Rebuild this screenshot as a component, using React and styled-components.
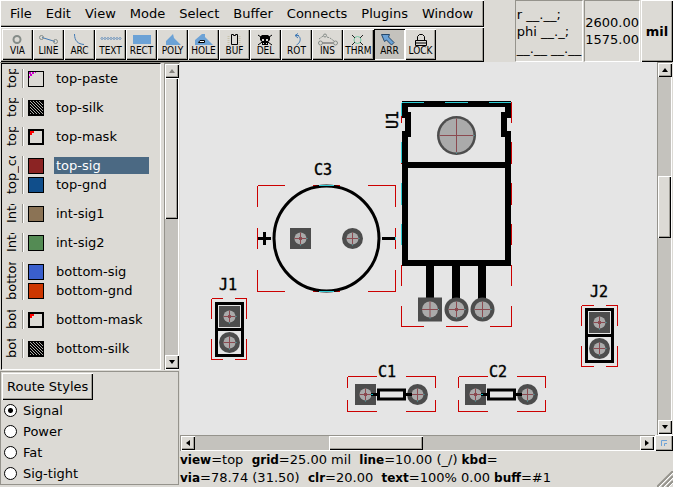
import React, { useState } from "react";
import styled, { createGlobalStyle, css } from "styled-components";

const GlobalStyle = createGlobalStyle`
  * { box-sizing: border-box; }
  body { margin: 0; background: #dcdad5; }
  body, button, input {
    font-family: "DejaVu Sans", sans-serif;
    font-size: 13px;
    line-height: 17px;
    color: #000;
  }
  button { margin: 0; padding: 0; border: 0; background: none; }
`;

const raised = css`
  background: #dcdad5;
  box-shadow: inset 1px 1px #fff, inset -1px -1px #000, inset -2px -2px #a19f98;
`;

const sunken = css`
  border: 1px solid;
  border-color: #95938c #fff #fff #95938c;
`;

const Page = styled.div`
  display: flex;
  flex-direction: column;
  height: 100vh;
  min-height: 400px;
`;

/* ---------- header ---------- */

const Header = styled.header`
  display: flex;
  flex: none;
  height: 62px;
`;

const HeaderMain = styled.div`
  display: flex;
  flex-direction: column;
  margin-right: auto;
`;

const MenuBar = styled.nav`
  ${raised}
  display: flex;
  height: 27px;
  padding: 0 4px 0 3px;
`;

const MenuItem = styled.button`
  padding: 0 7px;
`;

const Toolbar = styled.div`
  ${raised}
  display: flex;
  height: 35px;
  padding: 2px;
`;

const ToolButton = styled.button`
  ${raised}
  display: flex;
  flex-direction: column;
  align-items: center;
  width: 31px;
  height: 31px;
  font-family: "DejaVu Sans Condensed", "DejaVu Sans", sans-serif;
  font-size: 10px;
  line-height: 10px;
  ${(p) =>
    p.$active &&
    css`
      background: #c4c2bd;
      box-shadow: inset 1px 1px #000, inset -1px -1px #fff;
    `}
`;

const ToolIcon = styled.svg`
  flex: none;
  width: 31px;
  height: 17px;
`;

const Readout = styled.output`
  ${sunken}
  display: flex;
  flex-direction: column;
  justify-content: center;
  margin-right: 1px;
  padding: 0 ${(p) => (p.$tight ? 0 : 1)}px;
  white-space: nowrap;
`;

const UnitButton = styled.button`
  ${raised}
  width: 32px;
  font-weight: bold;
`;

/* ---------- body ---------- */

const Body = styled.div`
  display: grid;
  grid-template-columns: 180px minmax(0, 1fr);
  flex: 1;
  min-height: 0;
`;

const Sidebar = styled.aside`
  display: flex;
  flex-direction: column;
  min-height: 0;
  padding-bottom: 2px;
`;

const LayerArea = styled.div`
  display: flex;
  flex: 1;
  gap: 3px;
  min-height: 0;
  border-top: 1px solid #95938c;
  padding: 0 1px 1px 0;
`;

const LayerList = styled.div`
  display: flex;
  flex: 1;
  flex-direction: column;
  gap: 10px;
  overflow: hidden;
  margin-left: 1px;
  padding: 5px 11px 0 1px;
  border: 1px solid;
  border-color: #000 #fff #fff #000;
`;

const LayerGroup = styled.section`
  display: flex;
  flex: none;
`;

const GroupName = styled.div`
  display: flex;
  flex: none;
  width: 17px;
  height: ${(p) => p.$rows * 19}px;
  margin-right: 2px;
  overflow: hidden;
  writing-mode: vertical-rl;
  transform: rotate(180deg);
  white-space: nowrap;
`;

const GroupRows = styled.div`
  flex: 1;
  padding-left: 5px;
  border-left: 1px solid #95938c;
  box-shadow: inset 1px 0 #fff;
`;

const LayerRow = styled.div`
  display: flex;
  align-items: center;
  gap: 10px;
  height: 19px;
`;

const Swatch = styled.svg`
  flex: none;
  width: 16px;
  height: 16px;
`;

const LayerName = styled.button`
  flex: 1;
  padding: 0 2px;
  text-align: left;
  ${(p) =>
    p.$selected &&
    css`
      color: #fff;
      background: #4b6983;
    `}
`;

/* ---------- scroll bars ---------- */

const Track = styled.div`
  display: flex;
  flex: none;
  flex-direction: ${(p) => (p.$horizontal ? "row" : "column")};
  ${(p) => (p.$horizontal ? "height: 16px; margin-right: 2px" : "width: 15px")};
  padding: 1px;
  background: #c4c2bd;
  box-shadow: inset 1px 1px #95938c, inset -1px -1px #fff;
`;

const ArrowButton = styled.button`
  ${raised}
  display: flex;
  flex: none;
  align-items: center;
  justify-content: center;
  width: 14px;
  height: 14px;
`;

const Thumb = styled.div`
  ${raised}
  flex: ${(p) => p.$part} 1 0px;
`;

const Space = styled.div`
  flex: ${(p) => p.$part} 1 0px;
`;

const arrowShapes = {
  up: "M1 6 L4 2 L7 6 Z",
  down: "M1 2 H7 L4 6 Z",
  left: "M6 1 V7 L2 4 Z",
  right: "M2 1 L6 4 L2 7 Z",
};

function Arrow({ dir, muted }) {
  return (
    <ArrowButton aria-label={`Scroll ${dir}`} disabled={muted}>
      <svg width="8" height="8">
        <path d={arrowShapes[dir]} fill={muted ? "#85837d" : "#000"} />
      </svg>
    </ArrowButton>
  );
}

function ScrollBar({ horizontal, before, size, after, muted }) {
  return (
    <Track $horizontal={horizontal}>
      <Arrow dir={horizontal ? "left" : "up"} muted={muted} />
      <Space $part={before} />
      <Thumb $part={size} />
      <Space $part={after} />
      <Arrow dir={horizontal ? "right" : "down"} />
    </Track>
  );
}

/* ---------- route styles ---------- */

const RoutePanel = styled.fieldset`
  display: flex;
  flex: none;
  flex-direction: column;
  align-items: flex-start;
  min-width: 0;
  margin: 0 1px 0 0;
  padding: 1px 1px 0;
  border: 1px solid #95938c;
`;

const RouteButton = styled.button`
  ${raised}
  height: 27px;
  padding: 0 5px;
`;

const RadioLabel = styled.label`
  display: flex;
  align-items: center;
  gap: 6px;
  height: 21px;
  padding-left: 2px;
`;

const Radio = styled.input`
  appearance: none;
  width: 13px;
  height: 13px;
  margin: 0;
  border: 1px solid #000;
  border-radius: 50%;
  background: #fff;
  &:checked {
    background: radial-gradient(circle, #000 2px, #fff 3px);
  }
`;

/* ---------- work area ---------- */

const Work = styled.main`
  display: grid;
  grid-template-columns: minmax(0, 1fr) 16px;
  grid-template-rows: minmax(0, 1fr) 16px auto;
  min-height: 0;
`;

const Board = styled.svg`
  width: 100%;
  height: 100%;
  background: #e5e5e5;
`;

const CornerButton = styled.button`
  ${raised}
  display: flex;
  align-items: center;
  justify-content: center;
  margin-left: -2px;
`;

const StatusBar = styled.footer`
  display: flex;
  grid-column: 1 / -1;
  align-items: flex-end;
  justify-content: space-between;
  height: 36px;
  white-space: pre;
`;

const StatusText = styled.div`
  align-self: center;
  b { font-size: 12px; }
`;

const BoardLabel = styled.text`
  font-family: "DejaVu Sans Mono", monospace;
  font-size: 15px;
  fill: #000;
  stroke: #000;
  stroke-width: 0.4px;
`;

const blue = "#6ca2d6";
const darkBlue = "#427ab5";
const gray = "#858c88";

const tools = [
  ["VIA", <circle cx="15" cy="10.5" r="3.5" fill="none" stroke={gray} strokeWidth="2" />],
  ["LINE", <g fill="none" stroke={gray}>
    <path d="M9 8.5 L22 12.5" stroke={darkBlue} />
    <circle cx="8.5" cy="8.5" r="2" /><circle cx="22.5" cy="12.5" r="2" />
  </g>],
  ["ARC", <path d="M10.5 5 C10.5 12 14 15 20 15.5" fill="none" stroke={darkBlue} />],
  ["TEXT", <g fill="none" stroke={darkBlue} strokeWidth="0.8">
    {[7, 10, 13, 16, 19, 22, 25].map((x) => (
      <path key={x} d={`M${x - 1} 9.5 l1 -1.2 l1 1.2 l-1 1.2 Z`} />
    ))}
  </g>],
  ["RECT", <rect x="7" y="6" width="18" height="9" fill={blue} />],
  ["POLY", <path d="M16 5 L17 9 L24 16 H9 V12 Z" fill={blue} />],
  ["HOLE", <g>
    <path d="M14 5 H17 V8 L25 16 H7 V11 Z" fill={blue} />
    <path d="M12 11.5 H16.5 V13.5 H10.5 Z" fill="#fff" stroke="#000" />
  </g>],
  ["BUF", <g fill="none">
    <path d="M9.5 7 V16 M20.5 7 V16" stroke="#c8c3ad" strokeWidth="2" strokeDasharray="1 1" />
    <path d="M12.5 5.5 H14.5 V6.5 H16.5 V5.5 H18.5 V15.5 H12.5 Z" stroke="#000" />
  </g>],
  ["DEL", <g>
    <path d="M8 6 L22 16 M22 6 L8 16" stroke="#000" />
    <path d="M12 6 H18 L20 8 V11 L18 13 V16 H12 V13 L10 11 V8 Z" fill="#000" />
    <path d="M12 10 h2 v2 h-2 Z M16 10 h2 v2 h-2 Z M13 14 h1 v1 h-1 Z M16 14 h1 v1 h-1 Z" fill="#dcdad5" />
  </g>],
  ["ROT", <path d="M18 6.5 H14 M17 4.5 L14 6.5 L17 9 M15 6.5 C20 6 21 13 15.5 16" fill="none" stroke={darkBlue} />],
  ["INS", <g fill="none" stroke={gray}>
    <path d="M10 14 H21" stroke="#555" />
    <path d="M7 10 L11 7 M15 8 L18 9 L22 12" strokeDasharray="2 1" />
    <circle cx="13" cy="6.5" r="1.5" /><circle cx="8.5" cy="14" r="2" /><circle cx="23.5" cy="14" r="2" />
  </g>],
  ["THRM", <g fill="none">
    <circle cx="14.5" cy="11" r="3.5" stroke="#78c9a5" />
    <path d="M9 6 L12 9 M20 6 L17 9 M9 16 L12 13 M20 16 L17 13" stroke="#222" />
  </g>],
  ["ARR", <path d="M7.5 5.5 H15.5 L14.5 8 L20 13.5 L17.5 16 L12.5 11 L10.5 12.5 Z" fill={blue} stroke="#25486c" />],
  ["LOCK", <g fill="none" stroke="#000">
    <path d="M12.5 11 V7.5 L14.5 5.5 H17.5 L19.5 7.5 V11" />
    <path d="M10.5 11.5 H21.5 V16.5 H10.5 Z M10 14 H22" />
  </g>],
];

const menus = ["File", "Edit", "View", "Mode", "Select", "Buffer", "Connects", "Plugins", "Window"];

const layerGroups = [
  { name: "top", layers: [["top-paste", "paste"]] },
  { name: "top", layers: [["top-silk", "silk"]] },
  { name: "top", layers: [["top-mask", "mask"]] },
  { name: "top_co", layers: [["top-sig", "#8b2323"], ["top-gnd", "#104e8b"]] },
  { name: "Inte", layers: [["int-sig1", "#8b7355"]] },
  { name: "Inte", layers: [["int-sig2", "#548b54"]] },
  { name: "bottom", layers: [["bottom-sig", "#3a5fcd"], ["bottom-gnd", "#cd3700"]] },
  { name: "bot", layers: [["bottom-mask", "mask"]] },
  { name: "bot", layers: [["bottom-silk", "silk"]] },
];

function LayerSwatch({ kind }) {
  if (kind === "silk") {
    return (
      <Swatch>
        <rect width="16" height="16" fill="#000" />
        <path
          d="M2 13 l1 1 M2 10 l4 4 M2 7 l7 7 M2 4 l10 10 M2 1 l13 13 M5 1 l10 10 M8 1 l7 7 M11 1 l4 4"
          stroke="#dcdad5"
          strokeWidth="0.8"
        />
      </Swatch>
    );
  }
  const plain = kind === "paste" || kind === "mask";
  const edge = kind === "mask" ? 2 : 1;
  return (
    <Swatch shapeRendering="crispEdges">
      <rect width="16" height="16" fill="#000" />
      <rect x={edge} y={edge} width={16 - 2 * edge} height={16 - 2 * edge} fill={plain ? "#dcdad5" : kind} />
      {kind === "mask" && <path d="M2 2 H6 V4 H4 V6 H2 Z" fill="#f00" />}
      {kind === "paste" && <path d="M1 1 H3 V3 H1 Z M4 1 H6 V3 H4 Z M2 3 H4 V5 H2 Z M1 5 H2 V7 H1 Z M7 1 H8 V2 H7 Z" fill="#cd00cd" />}
    </Swatch>
  );
}

/* Selection outline made of evenly spaced dashes */
function Outline({ x, y, w, h, nx, ny }) {
  return (
    <g stroke="#c00" fill="none" shapeRendering="crispEdges">
      <path d={`M${x} ${y} h${w} M${x} ${y + h} h${w}`} strokeDasharray={w / nx} />
      <path d={`M${x} ${y} v${h} M${x + w} ${y} v${h}`} strokeDasharray={h / ny} />
    </g>
  );
}

function Pad({ x, y, r = 10.5, hole = 6, square, first }) {
  return (
    <g>
      {square ? (
        <rect x={x - r} y={y - r} width={2 * r} height={2 * r} fill="#4d4d4d" />
      ) : (
        <circle cx={x} cy={y} r={r} fill="#4d4d4d" />
      )}
      <circle cx={x} cy={y} r={hole} fill="#aaa" />
      <path d={`M${x - hole} ${y} h${2 * hole} M${x} ${y - hole} v${2 * hole}`} stroke="#8b4a50" />
      <path d={`M${x + hole} ${y} h1 M${x} ${y + hole} v1`} stroke="#4bb0b5" />
      {first && <path d={`M${x - 2} ${y} l2 -2 l2 2 l-2 2 Z`} fill="none" stroke="#8b4a50" />}
    </g>
  );
}

function PinHeader({ x, y }) {
  return (
    <g transform={`translate(${x} ${y})`}>
      <Pad x={14.5} y={14.5} square first />
      <Pad x={14.5} y={40.5} />
      <path d="M1.5 1.5 H27.5 V53.5 H1.5 Z M1.5 27.5 H27.5" fill="none" stroke="#000" strokeWidth="3" />
    </g>
  );
}

function Capacitor({ x, y }) {
  return (
    <g transform={`translate(${x} ${y})`}>
      <Pad x={10.5} y={11.5} square first />
      <Pad x={62.5} y={11.5} />
      <path d="M16 11.5 H23 M51 11.5 H57" stroke="#000" strokeWidth="3" />
      <rect x="23.5" y="7" width="26" height="9" fill="none" stroke="#000" strokeWidth="3" />
      <path d="M16 11.5 h2" stroke="#00bcc4" />
    </g>
  );
}

function Circuit() {
  return (
    <Board role="img" aria-label="Board layout">
      <g transform="translate(-180 -62)">
        <Outline x={257.5} y={185.5} w={138} h={106} nx={5} ny={5} />
        <circle cx="326.5" cy="238.5" r="52.5" fill="none" stroke="#000" strokeWidth="3" />
        <path d="M258 238.5 H271 M264.5 232 V245 M382 238.5 H395" stroke="#000" strokeWidth="3" />
        <path d="M319 185.5 H334 M319 291.5 H334 M395.5 237 V240" stroke="#2ec9d3" />
        <Pad x={300.5} y={238.5} square first />
        <Pad x={352.5} y={238.5} />
        <BoardLabel x="314" y="175">C3</BoardLabel>

        <Outline x={401.5} y={102.5} w={110} h={224} nx={5} ny={11} />
        <path
          d="M405 104 V115 H408 V134 H405 V263 H508 V134 H504 V115 H508 V104 Z M405 165 H508"
          fill="none"
          stroke="#000"
          strokeWidth="6"
        />
        <path d="M430 263 V302 M456 263 V302 M482 263 V302" stroke="#000" strokeWidth="8" />
        <path d="M402 102.5 H424 M445 102.5 H468 M489 102.5 H511 M401.5 103 V116 M401.5 142 V163 M401.5 183 V205 M401.5 224 V245" stroke="#2ed0d8" />
        <path d="M511.5 103 V123 M511.5 142 V163 M511.5 183 V205 M511.5 224 V245 M401.5 116 V123" stroke="#c00" />
        <Pad x={456.5} y={135.5} r={19.5} hole={17} />
        <Pad x={430} y={309.5} r={12} hole={8} square />
        <Pad x={456.5} y={309.5} r={12} hole={8} first />
        <Pad x={482.5} y={309.5} r={12} hole={8} />
        <BoardLabel transform="translate(398 129) rotate(-90)">U1</BoardLabel>

        <Outline x={211.5} y={298.5} w={35} h={61} nx={3} ny={3} />
        <PinHeader x={215} y={302} />
        <BoardLabel x="219" y="290">J1</BoardLabel>
        <Outline x={581.5} y={305.5} w={36} h={61} nx={3} ny={3} />
        <PinHeader x={585} y={308} />
        <BoardLabel x="590" y="297">J2</BoardLabel>

        <Outline x={347.5} y={376.5} w={88} h={35} nx={3} ny={3} />
        <Capacitor x={355} y={383} />
        <BoardLabel x="378" y="377">C1</BoardLabel>
        <Outline x={458.5} y={376.5} w={87} h={35} nx={3} ny={3} />
        <Capacitor x={465} y={383} />
        <BoardLabel x="489" y="377">C2</BoardLabel>
      </g>
    </Board>
  );
}

export default function App() {
  const [tool, setTool] = useState("ARR");
  const [layer, setLayer] = useState("top-sig");
  const [route, setRoute] = useState("Signal");

  return (
    <Page>
      <GlobalStyle />
      <Header>
        <HeaderMain>
          <MenuBar>
            {menus.map((m) => <MenuItem key={m}>{m}</MenuItem>)}
          </MenuBar>
          <Toolbar role="toolbar">
            {tools.map(([name, icon]) => (
              <ToolButton key={name} $active={tool === name} onClick={() => setTool(name)}>
                <ToolIcon aria-hidden="true">{icon}</ToolIcon>
                {name}
              </ToolButton>
            ))}
          </Toolbar>
        </HeaderMain>
        <Readout>
          <span>r __.__;</span>
          <span>phi __._;</span>
          <span>__.__ __.__</span>
        </Readout>
        <Readout $tight>
          <span>2600.00</span>
          <span>1575.00</span>
        </Readout>
        <UnitButton>mil</UnitButton>
      </Header>

      <Body>
        <Sidebar>
          <LayerArea>
            <LayerList>
              {layerGroups.map((g) => (
                <LayerGroup key={g.layers[0][0]}>
                  <GroupName $rows={g.layers.length}>{g.name}</GroupName>
                  <GroupRows>
                    {g.layers.map(([name, kind]) => (
                      <LayerRow key={name}>
                        <LayerSwatch kind={kind} />
                        <LayerName $selected={layer === name} onClick={() => setLayer(name)}>
                          {name}
                        </LayerName>
                      </LayerRow>
                    ))}
                  </GroupRows>
                </LayerGroup>
              ))}
            </LayerList>
            <ScrollBar before={0} size={142} after={137} muted />
          </LayerArea>
          <RoutePanel>
            <RouteButton>Route Styles</RouteButton>
            {["Signal", "Power", "Fat", "Sig-tight"].map((r) => (
              <RadioLabel key={r}>
                <Radio type="radio" name="route" checked={route === r} onChange={() => setRoute(r)} />
                {r}
              </RadioLabel>
            ))}
          </RoutePanel>
        </Sidebar>

        <Work>
          <Circuit />
          <ScrollBar before={99} size={62} after={182} />
          <ScrollBar horizontal before={134} size={94} after={217} />
          <CornerButton aria-label="Navigate">
            <svg width="8" height="8" fill="none" stroke={blue}>
              <path d="M1.5 7 V1.5 H7 M4.5 7 V4.5 H7" />
            </svg>
          </CornerButton>
          <StatusBar>
            <StatusText>
              <div><b>view</b>=top  <b>grid</b>=25.00 mil  <b>line</b>=10.00 (_/) <b>kbd</b>=</div>
              <div><b>via</b>=78.74 (31.50)  <b>clr</b>=20.00  <b>text</b>=100% 0.00 <b>buff</b>=#1</div>
            </StatusText>
            <svg width="16" height="16" aria-hidden="true">
              <path d="M0 16 L16 0 M5 16 L16 5 M10 16 L16 10" stroke="#95938c" strokeWidth="2" />
              <path d="M2 16 L16 2 M7 16 L16 7 M12 16 L16 12" stroke="#fff" />
            </svg>
          </StatusBar>
        </Work>
      </Body>
    </Page>
  );
}
